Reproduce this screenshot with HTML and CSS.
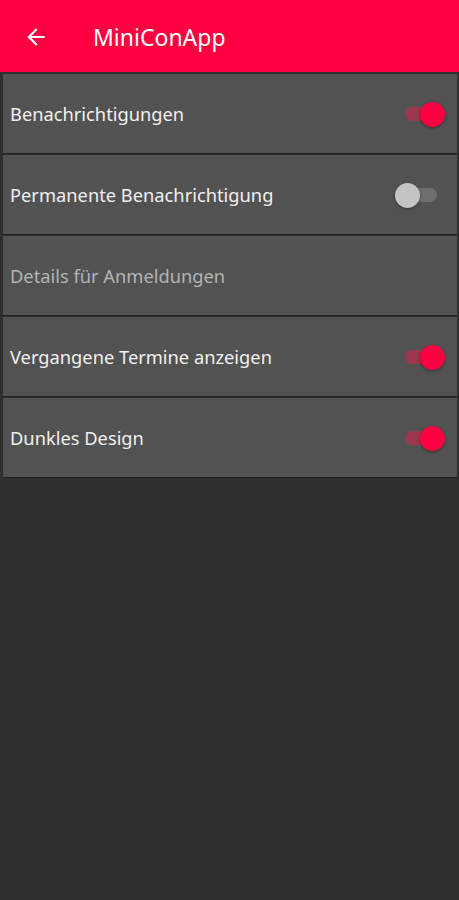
FILE: index.html
```html
<!DOCTYPE html>
<html lang="de">
<head>
    <meta charset="UTF-8">
    <meta name="viewport" content="width=device-width, initial-scale=1.0">
    <title>MiniConApp</title>
    <link rel="stylesheet" href="styles.css">
</head>
<body>
    <header class="toolbar">
        <svg class="back" width="26" height="26" viewBox="0 0 24 24">
            <path d="M20 11H7.83l5.59-5.59L12 4l-8 8 8 8 1.41-1.41L7.83 13H20v-2z" fill="#ffffff"/>
        </svg>
        <h1 class="title">MiniConApp</h1>
    </header>

    <ul class="settings">
        <li class="item">
            <span class="label">Benachrichtigungen</span>
            <span class="switch on"><span class="track"></span><span class="thumb"></span></span>
        </li>
        <li class="item">
            <span class="label">Permanente Benachrichtigung</span>
            <span class="switch"><span class="track"></span><span class="thumb"></span></span>
        </li>
        <li class="item">
            <span class="label muted">Details für Anmeldungen</span>
        </li>
        <li class="item">
            <span class="label">Vergangene Termine anzeigen</span>
            <span class="switch on"><span class="track"></span><span class="thumb"></span></span>
        </li>
        <li class="item">
            <span class="label">Dunkles Design</span>
            <span class="switch on"><span class="track"></span><span class="thumb"></span></span>
        </li>
    </ul>
</body>
</html>
```

FILE: styles.css
```css
body {
    margin: 0;
    height: 100vh;
    background-color: #303030;
    font-family: 'Noto Sans', 'Open Sans', sans-serif;
    color: #f0f0f0;
}

.toolbar {
    display: flex;
    align-items: center;
    height: 72px;
    background-color: #ff0040;
    padding: 2px 0 0 23px;
    box-sizing: border-box;
}

.back {
    flex: none;
}

.title {
    margin: 0 0 0 44px;
    font-size: 23px;
    font-weight: normal;
    color: #ffffff;
}

.settings {
    list-style: none;
    margin: 0;
    padding: 2px 2px 0 3px;
    display: flex;
    flex-direction: column;
    gap: 2px;
}

.item {
    display: flex;
    align-items: center;
    justify-content: space-between;
    height: 79px;
    padding: 0 12px 0 7px;
    background-color: #525252;
    box-shadow: 0 1px 1px rgba(0, 0, 0, 0.3);
}

.label {
    font-size: 18.3px;
    color: #f0f0f0;
}

.label.muted {
    color: #b4b4b4;
}

.switch {
    position: relative;
    width: 50px;
    height: 26px;
    flex: none;
}

.track {
    position: absolute;
    left: 8px;
    right: 8px;
    top: 6px;
    height: 14px;
    border-radius: 7px;
    background-color: #6e6e6e;
}

.thumb {
    position: absolute;
    top: 1px;
    left: 0;
    width: 25px;
    height: 25px;
    border-radius: 50%;
    background-color: #c4c4c4;
    box-shadow: 0 1px 3px rgba(0, 0, 0, 0.4);
}

.switch.on .track {
    left: 10px;
    background-color: #9e3650;
}

.switch.on .thumb {
    left: auto;
    right: 0;
    background-color: #ff0040;
}
```
